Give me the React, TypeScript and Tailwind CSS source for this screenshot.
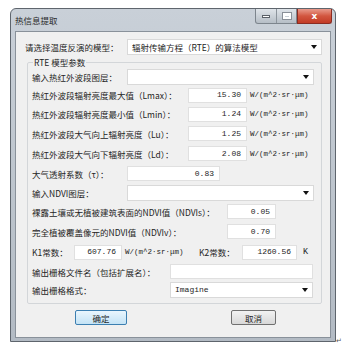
import React from 'react';

const font = { fontFamily: '"Noto Sans CJK SC", "Noto Sans", sans-serif' };
const mono = { fontFamily: '"Liberation Mono", "Noto Sans CJK SC", monospace' };

const Arrow = () => (
  <svg width="6" height="4" viewBox="0 0 6 4" className="ml-auto mr-[4px]">
    <path d="M0 0 H6 L3 4 Z" fill="#111" />
  </svg>
);

const Combo = ({ w, text, latin }: { w: string; text?: string; latin?: boolean }) => (
  <div className={`${w} h-[16px] bg-white border border-[#d9d9d9] flex items-center pl-[4px]`}>
    <span className={`truncate ${latin ? 'text-[8px]' : ''}`} style={latin ? mono : undefined}>
      {text}
    </span>
    <Arrow />
  </div>
);

const Input = ({ w, value }: { w: string; value?: string }) => (
  <div
    className={`${w} h-[15px] bg-white border border-[#e0e0e0] flex items-center justify-end pr-[5px] text-[8px]`}
    style={mono}
  >
    {value}
  </div>
);

const Row = ({ h, children }: { h: string; children: React.ReactNode }) => (
  <div className={`${h} flex items-center`}>{children}</div>
);

const Unit = ({ w }: { w?: string }) => (
  <span className={`ml-[3px] text-[7.5px] ${w ?? ''}`} style={mono}>
    W/(m^2·sr·μm)
  </span>
);

export default function App() {
  return (
    <div
      className="w-[346px] h-[348px] bg-white flex items-start pt-[8px] pl-[10px] text-[8.5px] leading-[12px] text-[#1e1e1e]"
      style={font}
    >
      <div className="w-[326px] h-[334px] flex flex-col rounded-t-[6px] border border-[#5e656d] bg-gradient-to-b from-[#c9d0d8] to-[#b3bbc4]">
        {/* title bar */}
        <div className="h-[22px] flex items-start">
          <span className="self-center ml-[4px] text-[#2a2a2a]">热信息提取</span>
          <div className="ml-auto mr-[3px] flex">
            <div className="flex h-[15px] rounded-bl-[3px] border border-t-0 border-[#7d858d] bg-gradient-to-b from-[#dfe4e9] to-[#b6bec6]">
              <div className="w-[21px] flex items-center justify-center border-r border-[#8c949c]">
                <div className="w-[8px] h-[3px] bg-white border border-[#5a6068]" />
              </div>
              <div className="w-[19px] flex items-center justify-center">
                <div className="w-[8px] h-[6px] border-2 border-t-[3px] border-white outline outline-1 outline-[#8a9098]" />
              </div>
            </div>
            <div className="w-[35px] h-[15px] rounded-br-[3px] border border-t-0 border-[#8a2c22] bg-gradient-to-b from-[#e89a8c] via-[#d2563f] to-[#c23a25] flex items-center justify-center">
              <span className="text-white font-bold text-[9px] leading-none" style={{ fontFamily: '"DejaVu Sans", sans-serif' }}>
                x
              </span>
            </div>
          </div>
        </div>

        {/* client */}
        <div className="flex-1 mx-[4px] mb-[3px] border border-[#89919a] bg-[#f0f0f0] flex flex-col">
          <div className="mt-[6px] ml-[9px] h-[17px] flex items-center">
            <span className="w-[102px]">请选择温度反演的模型：</span>
            <Combo w="w-[195px]" text="辐射传输方程（RTE）的算法模型" />
          </div>

          <fieldset className="mt-[1px] ml-[11px] w-[295px] border border-[#d3d6d9] rounded-[2px] pl-[4px] pb-[4px]">
            <legend className="ml-[1px] px-[1px] h-[12px]">RTE 模型参数</legend>

            <Row h="h-[18px]">
              <span className="w-[95px]">输入热红外波段图层：</span>
              <Combo w="w-[187px]" />
            </Row>
            <Row h="h-[18.5px]">
              <span className="w-[156px]">热红外波段辐射亮度最大值（Lmax）：</span>
              <Input w="w-[59px]" value="15.30" />
              <Unit />
            </Row>
            <Row h="h-[19.5px]">
              <span className="w-[156px]">热红外波段辐射亮度最小值（Lmin）：</span>
              <Input w="w-[59px]" value="1.24" />
              <Unit />
            </Row>
            <Row h="h-[19.5px]">
              <span className="w-[156px]">热红外波段大气向上辐射亮度（Lu）：</span>
              <Input w="w-[59px]" value="1.25" />
              <Unit />
            </Row>
            <Row h="h-[20px]">
              <span className="w-[156px]">热红外波段大气向下辐射亮度（Ld）：</span>
              <Input w="w-[59px]" value="2.08" />
              <Unit />
            </Row>
            <Row h="h-[20px]">
              <span className="w-[95px]">大气透射系数（τ）：</span>
              <Input w="w-[93px]" value="0.83" />
            </Row>
            <Row h="h-[18.5px]">
              <span className="w-[95px]">输入NDVI图层：</span>
              <Combo w="w-[187px]" />
            </Row>
            <Row h="h-[19.5px]">
              <span className="w-[195px]">裸露土壤或无植被建筑表面的NDVI值（NDVIs）：</span>
              <Input w="w-[49px]" value="0.05" />
            </Row>
            <Row h="h-[20.5px]">
              <span className="w-[195px]">完全植被覆盖像元的NDVI值（NDVIv）：</span>
              <Input w="w-[49px]" value="0.70" />
            </Row>
            <Row h="h-[20px]">
              <span className="w-[42px]">K1常数：</span>
              <Input w="w-[48px]" value="607.76" />
              <Unit w="w-[74px]" />
              <span className="w-[43px]">K2常数：</span>
              <Input w="w-[55px]" value="1260.56" />
              <span className="ml-[6px]" style={mono}>K</span>
            </Row>
            <Row h="h-[19px]">
              <span className="w-[138px]">输出栅格文件名（包括扩展名）：</span>
              <Input w="w-[143px]" />
            </Row>
            <Row h="h-[18px]">
              <span className="w-[138px]">输出栅格格式：</span>
              <Combo w="w-[143px]" text="Imagine" latin />
            </Row>
          </fieldset>

          <div className="mt-[6px] flex">
            <button className="ml-[59px] w-[52px] h-[15px] rounded-[2px] border border-[#3c7fb1] bg-gradient-to-b from-[#eaf6fd] to-[#c4e3f6] flex items-center justify-center">
              确定
            </button>
            <button className="ml-[104px] w-[45px] h-[15px] rounded-[2px] border border-[#707070] bg-gradient-to-b from-[#f2f2f2] to-[#d8d8d8] flex items-center justify-center">
              取消
            </button>
          </div>
        </div>
      </div>
      <span className="self-end mb-[2px] text-[7px] text-[#555]">↵</span>
    </div>
  );
}
